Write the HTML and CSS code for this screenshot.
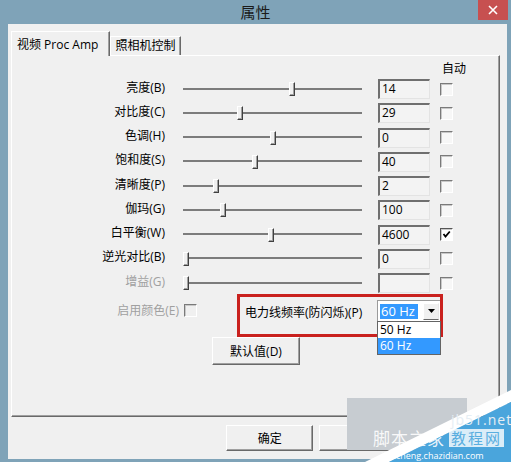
FILE: index.html
```html
<!DOCTYPE html>
<html lang="zh-CN">
<head>
<meta charset="utf-8">
<title>属性</title>
<link rel="stylesheet" href="styles.css">
</head>
<body>
<div class="window">
  <div class="titlebar">
    <span class="title">属性</span>
    <span class="close"><svg width="10" height="10" viewBox="0 0 10 10"><path d="M1 1 L9 9 M9 1 L1 9" stroke="#fff" stroke-width="1.6"/></svg></span>
  </div>
  <div class="client">
    <div class="tabs">
      <div class="tab active">视频 Proc Amp</div>
      <div class="tab">照相机控制</div>
    </div>
    <div class="panel">
      <div class="auto-head">自动</div>
      <div class="rows">
        <div class="row"><span class="label">亮度(B)</span><div class="slider"><div class="track"></div><div class="thumb" style="left:106px"></div></div><div class="edit">14</div><span class="cb"></span></div>
        <div class="row"><span class="label">对比度(C)</span><div class="slider"><div class="track"></div><div class="thumb" style="left:54px"></div></div><div class="edit">29</div><span class="cb"></span></div>
        <div class="row"><span class="label">色调(H)</span><div class="slider"><div class="track"></div><div class="thumb" style="left:87px"></div></div><div class="edit">0</div><span class="cb"></span></div>
        <div class="row"><span class="label">饱和度(S)</span><div class="slider"><div class="track"></div><div class="thumb" style="left:69px"></div></div><div class="edit">40</div><span class="cb"></span></div>
        <div class="row"><span class="label">清晰度(P)</span><div class="slider"><div class="track"></div><div class="thumb" style="left:30px"></div></div><div class="edit">2</div><span class="cb"></span></div>
        <div class="row"><span class="label">伽玛(G)</span><div class="slider"><div class="track"></div><div class="thumb" style="left:37px"></div></div><div class="edit">100</div><span class="cb"></span></div>
        <div class="row"><span class="label">白平衡(W)</span><div class="slider"><div class="track"></div><div class="thumb" style="left:85px"></div></div><div class="edit">4600</div><span class="cb checked"><svg width="9" height="9" viewBox="0 0 9 9"><path d="M1.5 4 L3.5 6.5 L7.8 1.5" fill="none" stroke="#000" stroke-width="1.8"/></svg></span></div>
        <div class="row"><span class="label">逆光对比(B)</span><div class="slider"><div class="track"></div><div class="thumb" style="left:0px"></div></div><div class="edit">0</div><span class="cb"></span></div>
        <div class="row"><span class="label disabled">增益(G)</span><div class="slider"><div class="track"></div><div class="thumb" style="left:0px"></div></div><div class="edit"></div><span class="cb"></span></div>
      </div>
      <div class="lower">
        <div class="enable"><span class="label disabled">启用颜色(E)</span><span class="cb small"></span></div>
        <div class="redbox">
          <span class="freq-label">电力线频率(防闪烁)(P)</span>
          <div class="combo">
            <span class="combo-sel">60 Hz</span>
            <span class="combo-btn"><svg width="7" height="4" viewBox="0 0 7 4"><path d="M0 0 H7 L3.5 4 Z" fill="#000"/></svg></span>
            <div class="droplist">
              <div class="opt">50 Hz</div>
              <div class="opt sel">60 Hz</div>
            </div>
          </div>
        </div>
      </div>
      <div class="default-row"><button class="btn default">默认值(D)</button></div>
    </div>
    <div class="buttons">
      <button class="btn">确定</button>
      <button class="btn"></button>
      <button class="btn"></button>
    </div>
  </div>
  <div class="watermark">
    <svg class="wm-shapes" width="166" height="72" viewBox="0 0 166 72">
      <rect x="2" y="8" width="120" height="52" fill="#c7ccd1"/>
      <polygon points="20,72 166,0 166,12 44,72" fill="#ffffff"/>
      <polygon points="44,72 166,12 166,72" fill="#4aa5dc"/>
    </svg>
    <span class="wm-site">jb51.net</span>
    <span class="wm-big">脚本之家</span>
    <span class="wm-box">教程网</span>
    <span class="wm-url">jiaocheng.chazidian.com</span>
  </div>
</div>
</body>
</html>
```

FILE: styles.css
```css
* { box-sizing: border-box; }
html, body { margin: 0; padding: 0; }
body {
  width: 511px;
  height: 462px;
  overflow: hidden;
  font-family: "Open Sans", "Noto Sans CJK SC", sans-serif;
  font-size: 12px;
  color: #000;
}
.window {
  position: relative;
  width: 511px;
  height: 462px;
  background: #7fa3b8;
  display: flex;
  flex-direction: column;
}
.titlebar {
  height: 24px;
  display: grid;
  grid-template-columns: 1fr auto 1fr;
  align-items: start;
}
.title {
  grid-column: 2;
  font-family: "Noto Sans CJK SC", sans-serif;
  font-size: 15px;
  line-height: 24px;
  color: #1b1b1b;
}
.close {
  grid-column: 3;
  justify-self: end;
  margin-right: 3px;
  width: 30px;
  height: 20px;
  background: #c75050;
  display: flex;
  align-items: center;
  justify-content: center;
}
.client {
  margin-left: 8px;
  width: 499px;
  height: 435px;
  background: #f0f0f0;
  display: flex;
  flex-direction: column;
  padding: 0 7px 0 3px;
}
.tabs {
  display: flex;
  align-items: flex-end;
  margin-top: 7px;
  height: 24px;
  position: relative;
  z-index: 1;
}
.tab {
  height: 19px;
  width: 71px;
  display: flex;
  align-items: center;
  justify-content: center;
  background: #f0f0f0;
  border-top: 1px solid #fff;
  border-left: 1px solid #fff;
  border-right: 1px solid #696969;
  box-shadow: inset -1px 0 #a0a0a0;
  line-height: 16px;
}
.tab.active {
  height: 25px;
  width: 99px;
  margin-bottom: -1px;
  justify-content: flex-start;
  padding-left: 5px;
  padding-top: 1px;
}
.panel {
  width: 489px;
  height: 362px;
  border-top: 1px solid #fff;
  border-left: 1px solid #fff;
  border-right: 1px solid #696969;
  border-bottom: 1px solid #696969;
  box-shadow: inset -1px -1px #a0a0a0;
  display: flex;
  flex-direction: column;
}
.auto-head {
  margin-top: 5px;
  height: 16px;
  line-height: 16px;
  padding-left: 430px;
}
.rows {
  display: flex;
  flex-direction: column;
}
.row {
  height: 24.25px;
  display: flex;
  align-items: center;
}
.label {
  flex: 0 0 153px;
  width: 153px;
  text-align: right;
  line-height: 16px;
  margin-top: -3px;
  white-space: nowrap;
}
.label.disabled { color: #a0a0a0; }
.slider {
  position: relative;
  flex: 0 0 179px;
  width: 179px;
  height: 20px;
  margin-left: 18px;
  display: flex;
  align-items: center;
}
.track {
  flex: 1;
  height: 2px;
  background: #7c7c7c;
  margin-top: -1px;
}
.thumb {
  position: absolute;
  top: 3px;
  width: 6px;
  height: 14px;
  background: #f0f0f0;
  border-top: 1px solid #fff;
  border-left: 1px solid #fff;
  border-right: 1px solid #404040;
  border-bottom: 1px solid #404040;
  box-shadow: inset -1px -1px #a0a0a0;
}
.edit {
  flex: 0 0 52px;
  width: 52px;
  height: 20px;
  margin-left: 16px;
  background: #f3f3f3;
  border-top: 2px solid #6f6f6f;
  border-left: 2px solid #6f6f6f;
  border-right: 1px solid #e3e3e3;
  border-bottom: 1px solid #e3e3e3;
  padding-left: 2px;
  line-height: 16px;
}
.cb {
  flex: 0 0 13px;
  width: 13px;
  height: 13px;
  margin-left: 10px;
  background: #f7f7f7;
  border-top: 1px solid #7a7a7a;
  border-left: 1px solid #7a7a7a;
  border-right: 1px solid #fff;
  border-bottom: 1px solid #fff;
  box-shadow: inset 1px 1px #c8c8c8;
  display: flex;
  align-items: center;
  justify-content: center;
}
.cb.checked {
  border-top-color: #555;
  border-left-color: #555;
  background: #fff;
}
.lower {
  display: flex;
  align-items: flex-start;
  margin-top: -1px;
}
.enable {
  width: 185px;
  height: 13px;
  margin-top: 10px;
  display: flex;
  align-items: center;
  justify-content: flex-end;
}
.enable .label {
  flex: 0 0 auto;
  width: auto;
  margin-top: 0;
}
.cb.small { margin-left: 5px; background: #f0f0f0; }
.redbox {
  margin-left: 40px;
  width: 206px;
  height: 43px;
  border: 3px solid #c9211e;
  display: flex;
  align-items: flex-start;
  padding-left: 5px;
}
.freq-label {
  margin-top: 8px;
  line-height: 16px;
  white-space: nowrap;
}
.combo {
  position: relative;
  margin-left: auto;
  margin-top: 3px;
  width: 63px;
  height: 21px;
  background: #fff;
  border-top: 1px solid #9a9a9a;
  border-left: 1px solid #9a9a9a;
  display: flex;
  align-items: center;
  padding-left: 2px;
}
.combo-sel {
  background: #3399ff;
  color: #fff;
  font-size: 13px;
  line-height: 15px;
  padding: 0 3px 0 1px;
}
.combo-btn {
  margin-left: auto;
  margin-right: 1px;
  width: 16px;
  height: 17px;
  background: #f0f0f0;
  border-top: 1px solid #fff;
  border-left: 1px solid #fff;
  border-bottom: 1px solid #696969;
  border-right: 1px solid #e8e8e8;
  display: flex;
  align-items: center;
  justify-content: center;
}
.droplist {
  position: absolute;
  top: 20px;
  left: -1px;
  width: 64px;
  background: #fff;
  border: 1px solid #646464;
  display: flex;
  flex-direction: column;
  z-index: 2;
}
.opt {
  height: 16px;
  line-height: 16px;
  padding-left: 2px;
  font-size: 12px;
}
.opt.sel {
  background: #3399ff;
  color: #fff;
}
.default-row {
  padding-left: 200px;
}
.btn {
  font-family: "Open Sans", "Noto Sans CJK SC", sans-serif;
  font-size: 12px;
  color: #000;
  width: 88px;
  height: 26px;
  padding: 0;
  background: #f0f0f0;
  border-top: 1px solid #fff;
  border-left: 1px solid #fff;
  border-right: 1px solid #696969;
  border-bottom: 1px solid #696969;
  box-shadow: inset -1px -1px #a0a0a0;
}
.btn.default { height: 28px; }
.buttons {
  display: flex;
  gap: 6px;
  margin-top: 8px;
  padding-left: 215px;
}
.watermark {
  position: absolute;
  left: 345px;
  top: 390px;
  width: 166px;
  height: 72px;
  overflow: hidden;
}
.wm-shapes { position: absolute; left: 0; top: 0; }
.wm-site {
  position: absolute;
  left: 106px;
  top: 22px;
  font-size: 14px;
  line-height: 16px;
  color: #e6eef4;
  letter-spacing: 1px;
}
.wm-big {
  position: absolute;
  left: 28px;
  top: 38px;
  font-family: "Noto Sans CJK SC", sans-serif;
  font-size: 17px;
  line-height: 19px;
  color: rgba(255,255,255,0.9);
  letter-spacing: 1px;
}
.wm-box {
  position: absolute;
  left: 104px;
  top: 39px;
  padding: 0 2px;
  font-family: "Noto Sans CJK SC", sans-serif;
  font-size: 15px;
  line-height: 18px;
  color: #5aaedf;
  background: rgba(255,255,255,0.8);
  letter-spacing: 2px;
}
.wm-url {
  position: absolute;
  left: 36px;
  top: 61px;
  font-size: 9px;
  line-height: 10px;
  color: #ffffff;
}
```
